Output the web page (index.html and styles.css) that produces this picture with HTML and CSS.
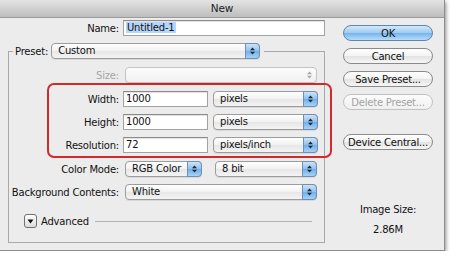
FILE: index.html
```html
<!DOCTYPE html>
<html lang="en">
<head>
  <meta charset="UTF-8">
  <title>New</title>
  <link rel="stylesheet" href="styles.css">
</head>
<body>
  <div class="window">
    <div class="titlebar">New</div>
    <div class="dialog">
      <div class="main">
        <div class="row">
          <label class="label">Name:</label>
          <div class="input input-name"><span class="selected">Untitled-1</span></div>
        </div>

        <fieldset class="group">
          <legend class="legend">
            <span class="legend-label">Preset:</span>
            <div class="select select-preset">Custom
              <span class="arrows"><svg width="7" height="10" viewBox="0 0 7 10"><path d="M3.5 1.5 L6 4.2 H1 Z M3.5 8.5 L6 5.8 H1 Z"/></svg></span>
            </div>
          </legend>

          <div class="row row-size">
            <label class="label is-disabled">Size:</label>
            <div class="select select-full is-disabled">
              <span class="arrows"><svg width="7" height="10" viewBox="0 0 7 10"><path d="M3.5 1.5 L6 4.2 H1 Z M3.5 8.5 L6 5.8 H1 Z"/></svg></span>
            </div>
          </div>

          <!-- annotation box round the size fields -->
          <div class="highlight">
            <div class="row">
              <label class="label">Width:</label>
              <div class="field-pair">
                <div class="input input-num">1000</div>
                <div class="select select-unit">pixels
                  <span class="arrows"><svg width="7" height="10" viewBox="0 0 7 10"><path d="M3.5 1.5 L6 4.2 H1 Z M3.5 8.5 L6 5.8 H1 Z"/></svg></span>
                </div>
              </div>
            </div>
            <div class="row">
              <label class="label">Height:</label>
              <div class="field-pair">
                <div class="input input-num">1000</div>
                <div class="select select-unit">pixels
                  <span class="arrows"><svg width="7" height="10" viewBox="0 0 7 10"><path d="M3.5 1.5 L6 4.2 H1 Z M3.5 8.5 L6 5.8 H1 Z"/></svg></span>
                </div>
              </div>
            </div>
            <div class="row">
              <label class="label">Resolution:</label>
              <div class="field-pair">
                <div class="input input-num">72</div>
                <div class="select select-unit">pixels/inch
                  <span class="arrows"><svg width="7" height="10" viewBox="0 0 7 10"><path d="M3.5 1.5 L6 4.2 H1 Z M3.5 8.5 L6 5.8 H1 Z"/></svg></span>
                </div>
              </div>
            </div>
          </div>

          <div class="row row-color">
            <label class="label">Color Mode:</label>
            <div class="field-pair">
              <div class="select select-mode">RGB Color
                <span class="arrows"><svg width="7" height="10" viewBox="0 0 7 10"><path d="M3.5 1.5 L6 4.2 H1 Z M3.5 8.5 L6 5.8 H1 Z"/></svg></span>
              </div>
              <div class="select select-bits">8 bit
                <span class="arrows"><svg width="7" height="10" viewBox="0 0 7 10"><path d="M3.5 1.5 L6 4.2 H1 Z M3.5 8.5 L6 5.8 H1 Z"/></svg></span>
              </div>
            </div>
          </div>

          <div class="row row-bg">
            <label class="label">Background Contents:</label>
            <div class="select select-full">White
              <span class="arrows"><svg width="7" height="10" viewBox="0 0 7 10"><path d="M3.5 1.5 L6 4.2 H1 Z M3.5 8.5 L6 5.8 H1 Z"/></svg></span>
            </div>
          </div>

          <div class="advanced">
            <span class="disclosure"><svg width="7" height="5" viewBox="0 0 7 5"><path d="M0.5 0.5 H6.5 L3.5 4.5 Z"/></svg></span>
            <span>Advanced</span>
          </div>
        </fieldset>
      </div>

      <div class="side">
        <button class="btn btn-default">OK</button>
        <button class="btn">Cancel</button>
        <button class="btn">Save Preset...</button>
        <button class="btn" disabled>Delete Preset...</button>
        <button class="btn btn-device">Device Central...</button>
        <div class="size-info">
          <p>Image Size:</p>
          <p>2.86M</p>
        </div>
      </div>
    </div>
  </div>
</body>
</html>
```

FILE: styles.css
```css
* {
  box-sizing: border-box;
}
body {
  margin: 0;
  background: #fff;
  font-family: "DejaVu Sans", sans-serif;
  font-size: 10px;
  letter-spacing: -0.2px;
  color: #111;
}

.window {
  width: 445px;
  height: 251px;
  background: #ececec;
  border-right: 1px solid #8c8c8c;
  border-bottom: 1px solid #8c8c8c;
  box-shadow: 1px 2px 4px rgba(0, 0, 0, 0.45);
}
.titlebar {
  height: 18px;
  line-height: 17px;
  text-align: center;
  font-size: 10.5px;
  color: #222;
  background: linear-gradient(#e4e4e4, #bdbdbd);
  border-bottom: 1px solid #9a9a9a;
}

.dialog {
  display: flex;
  padding: 2px 0 0 8px;
}
.main {
  width: 317px;
}

/* form rows */
.row {
  display: grid;
  grid-template-columns: var(--label-w, 111px) 1fr;
  column-gap: 4px;
  height: 16px;
  align-items: center;
}
.label {
  text-align: right;
  white-space: nowrap;
}
.label.is-disabled {
  color: #a6a6a6;
}
.field-pair {
  display: flex;
  align-items: center;
}

.input {
  height: 16px;
  line-height: 14px;
  padding: 0 2px;
  background: #fff;
  border: 1px solid #a3a3a3;
  border-top-color: #8a8a8a;
  box-shadow: inset 0 1px 1px rgba(0, 0, 0, 0.12);
  white-space: nowrap;
}
.input-name {
  width: 202px;
}
.selected {
  background: #b5d5fb;
  padding: 0 1px;
}
.input-num {
  width: 85px;
}

.select {
  position: relative;
  height: 16px;
  line-height: 14px;
  padding: 0 0 0 6px;
  margin-left: 2px;
  background: linear-gradient(#ffffff, #f1f1f1 50%, #e6e6e6 51%, #f4f4f4);
  border: 1px solid #9c9c9c;
  border-radius: 4px;
  box-shadow: 0 1px 0 rgba(0, 0, 0, 0.08);
  white-space: nowrap;
}
.arrows {
  position: absolute;
  top: -1px;
  right: -1px;
  bottom: -1px;
  width: 15px;
  display: flex;
  align-items: center;
  justify-content: center;
  background: linear-gradient(#cfe3f7, #8fc0ec 50%, #6faee8 51%, #a8d2f5);
  border: 1px solid #6f8fb5;
  border-radius: 0 4px 4px 0;
}
.arrows svg {
  fill: #1c2a3a;
}
.select.is-disabled {
  background: linear-gradient(#fbfbfb, #f1f1f1);
  border-color: #c4c4c4;
}
.select.is-disabled .arrows {
  background: none;
  border-color: transparent;
}
.select.is-disabled .arrows svg {
  fill: #a8a8a8;
}
.select-full {
  width: 192px;
}
.select-unit {
  width: 105px;
  margin-left: 5px;
}
.select-mode {
  width: 77px;
}
.select-bits {
  width: 102px;
  margin-left: 13px;
}
.select-preset {
  width: 209px;
  margin-left: 3px;
}

/* preset group */
.group {
  margin: 7px 0 0;
  padding: 8px 0 14px;
  border: 1px solid #a9a9a9;
  min-inline-size: 0;
}
.legend {
  display: flex;
  align-items: center;
  margin-left: 4px;
  padding: 0 4px 0 2px;
}
.group .row {
  --label-w: 110px;
}

/* red annotation box */
.highlight {
  margin: 0 -8px 0 38px;
  padding: 6px 0 3px;
  border: 2px solid #cf2a2c;
  border-radius: 7px;
}
.highlight .row {
  --label-w: 70px;
}
.highlight .row + .row {
  margin-top: 7px;
}
.row-color {
  margin-top: 3px;
}
.row-bg {
  margin-top: 7px;
}

.advanced {
  display: flex;
  align-items: center;
  margin: 14px 12px 0 15px;
  height: 14px;
}
.advanced::after {
  content: "";
  flex: 1;
  border-top: 1px solid #b3b3b3;
  margin-left: 6px;
}
.disclosure {
  width: 13px;
  height: 14px;
  margin-right: 4px;
  display: flex;
  align-items: center;
  justify-content: center;
  border: 1px solid #707070;
  border-radius: 3px;
  background: linear-gradient(#ffffff, #dcdcdc);
}
.disclosure svg {
  fill: #111;
}

/* buttons column */
.side {
  width: 90px;
  margin: 5px 0 0 18px;
  display: flex;
  flex-direction: column;
}
.btn {
  height: 16px;
  padding: 0;
  font: inherit;
  letter-spacing: inherit;
  color: #111;
  background: linear-gradient(#ffffff, #f3f3f3 50%, #e3e3e3 51%, #f6f6f6);
  border: 1px solid #8a8a8a;
  border-radius: 8px;
}
.btn + .btn {
  margin-top: 7px;
}
.btn-default {
  background: linear-gradient(#d3e8fb, #9ccbf2 50%, #74b4ec 51%, #b8dcf8);
  border-color: #5f84ad;
}
.btn:disabled {
  color: #a3a3a3;
  border-color: #c2c2c2;
  background: linear-gradient(#fcfcfc, #f0f0f0);
}
.btn.btn-device {
  margin-top: 24px;
}
.size-info {
  margin-top: 54px;
  text-align: center;
}
.size-info p {
  margin: 0 0 8px;
  line-height: 12px;
}
```
